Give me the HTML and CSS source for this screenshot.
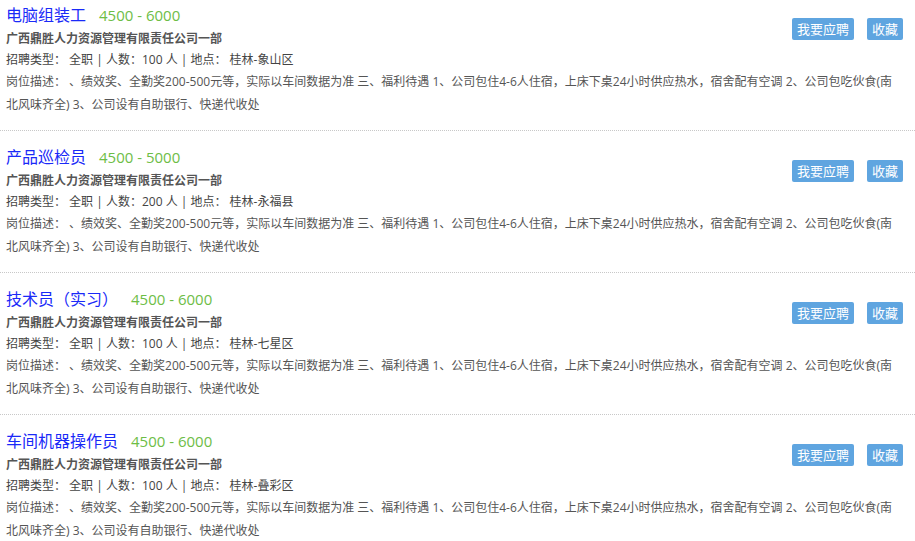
FILE: index.html
```html
<!DOCTYPE html>
<html lang="zh-CN">
<head>
<meta charset="utf-8">
<title>职位列表</title>
<link rel="stylesheet" href="styles.css">
</head>
<body>
<div class="list">
  <div class="item">
    <div class="head">
      <div class="info">
        <div class="title"><a class="name">电脑组装工</a><span class="salary">4500 - 6000</span></div>
        <div class="company">广西鼎胜人力资源管理有限责任公司一部</div>
        <div class="meta">招聘类型：&nbsp;全职 | 人数：100 人 | 地点：&nbsp;桂林-象山区</div>
      </div>
      <div class="actions"><span class="btn">我要应聘</span><span class="btn">收藏</span></div>
    </div>
    <div class="desc">岗位描述：&nbsp;、绩效奖、全勤奖200-500元等，实际以车间数据为准 三、福利待遇 1、公司包住4-6人住宿，上床下桌24小时供应热水，宿舍配有空调 2、公司包吃伙食(南北风味齐全) 3、公司设有自助银行、快递代收处</div>
  </div>
  <div class="item">
    <div class="head">
      <div class="info">
        <div class="title"><a class="name">产品巡检员</a><span class="salary">4500 - 5000</span></div>
        <div class="company">广西鼎胜人力资源管理有限责任公司一部</div>
        <div class="meta">招聘类型：&nbsp;全职 | 人数：200 人 | 地点：&nbsp;桂林-永福县</div>
      </div>
      <div class="actions"><span class="btn">我要应聘</span><span class="btn">收藏</span></div>
    </div>
    <div class="desc">岗位描述：&nbsp;、绩效奖、全勤奖200-500元等，实际以车间数据为准 三、福利待遇 1、公司包住4-6人住宿，上床下桌24小时供应热水，宿舍配有空调 2、公司包吃伙食(南北风味齐全) 3、公司设有自助银行、快递代收处</div>
  </div>
  <div class="item">
    <div class="head">
      <div class="info">
        <div class="title"><a class="name">技术员（实习）</a><span class="salary">4500 - 6000</span></div>
        <div class="company">广西鼎胜人力资源管理有限责任公司一部</div>
        <div class="meta">招聘类型：&nbsp;全职 | 人数：100 人 | 地点：&nbsp;桂林-七星区</div>
      </div>
      <div class="actions"><span class="btn">我要应聘</span><span class="btn">收藏</span></div>
    </div>
    <div class="desc">岗位描述：&nbsp;、绩效奖、全勤奖200-500元等，实际以车间数据为准 三、福利待遇 1、公司包住4-6人住宿，上床下桌24小时供应热水，宿舍配有空调 2、公司包吃伙食(南北风味齐全) 3、公司设有自助银行、快递代收处</div>
  </div>
  <div class="item">
    <div class="head">
      <div class="info">
        <div class="title"><a class="name">车间机器操作员</a><span class="salary">4500 - 6000</span></div>
        <div class="company">广西鼎胜人力资源管理有限责任公司一部</div>
        <div class="meta">招聘类型：&nbsp;全职 | 人数：100 人 | 地点：&nbsp;桂林-叠彩区</div>
      </div>
      <div class="actions"><span class="btn">我要应聘</span><span class="btn">收藏</span></div>
    </div>
    <div class="desc">岗位描述：&nbsp;、绩效奖、全勤奖200-500元等，实际以车间数据为准 三、福利待遇 1、公司包住4-6人住宿，上床下桌24小时供应热水，宿舍配有空调 2、公司包吃伙食(南北风味齐全) 3、公司设有自助银行、快递代收处</div>
  </div>
</div>
</body>
</html>
```

FILE: styles.css
```css
html, body {
  margin: 0;
  padding: 0;
  background: #fff;
  overflow: hidden;
}
body {
  font-family: "Open Sans", "Noto Sans CJK SC", sans-serif;
  font-size: 12px;
  color: #444;
}
.list {
  margin-top: -11px;
}
.item {
  padding: 14px 12px 14px 6px;
  border-bottom: 1px dotted #c8c8c8;
}
.head {
  display: flex;
  justify-content: space-between;
  align-items: flex-start;
}
.title {
  line-height: 24px;
  height: 25px;
  white-space: nowrap;
}
.name {
  font-size: 16px;
  color: #1a2af8;
}
.salary {
  font-size: 15px;
  color: #6dbd46;
  margin-left: 13px;
}
.company {
  font-weight: bold;
  color: #555;
  line-height: 22px;
}
.meta {
  line-height: 20px;
  color: #444;
}
.desc {
  line-height: 23px;
  color: #555;
}
.actions {
  display: flex;
  gap: 13px;
  margin-top: 15px;
}
.btn {
  display: inline-block;
  background: #5fa5e0;
  color: #fff;
  font-size: 13px;
  line-height: 22px;
  height: 22px;
  padding: 0 5px;
  border-radius: 2px;
}
```
